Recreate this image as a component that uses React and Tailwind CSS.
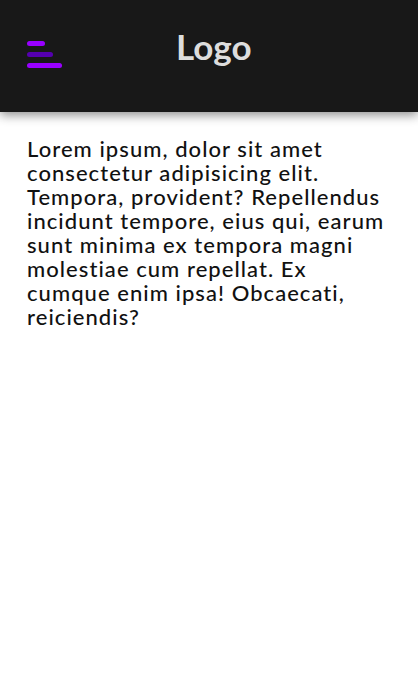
export default function App() {
  const lines = [
    "Lorem ipsum, dolor sit amet",
    "consectetur adipisicing elit.",
    "Tempora, provident? Repellendus",
    "incidunt tempore, eius qui, earum",
    "sunt minima ex tempora magni",
    "molestiae cum repellat. Ex",
    "cumque enim ipsa! Obcaecati,",
    "reiciendis?",
  ];
  return (
    <div className="min-h-[697px] bg-white" style={{ fontFamily: "Lato, 'Open Sans', sans-serif" }}>
      <header className="h-[112px] bg-[#181818] shadow-[0_3px_10px_rgba(0,0,0,0.45)] flex items-start px-[27px] relative z-10">
        <button className="mt-[41px] flex flex-col gap-[6px] w-[35px]">
          <span className="block h-[5px] w-[18px] rounded-full bg-[#9900ff]" />
          <span className="block h-[5px] w-[26px] rounded-full bg-[#5500b0]" />
          <span className="block h-[5px] w-[35px] rounded-full bg-[#9900ff]" />
        </button>
        <div className="ml-[114px] mt-[26px] text-[35px] leading-[40px] font-bold text-[#dddddd]">Logo</div>
      </header>
      <main className="px-[27px] pt-[25px]">
        <p className="text-[22px] leading-[24px] tracking-[1.05px] font-medium text-[#111]">
          {lines.map((l, i) => (
            <span key={i} className="block whitespace-nowrap">{l}</span>
          ))}
        </p>
      </main>
    </div>
  );
}
